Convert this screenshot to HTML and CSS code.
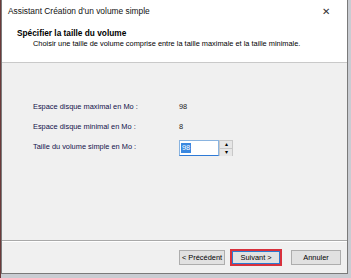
FILE: index.html
```html
<!DOCTYPE html>
<html lang="fr">
<head>
  <meta charset="UTF-8">
  <title>Assistant Création d'un volume simple</title>
  <link rel="stylesheet" href="styles.css">
</head>
<body>
  <div class="desk">
    <div class="window">
      <div class="titlebar">
        <span class="title">Assistant Création d'un volume simple</span>
        <span class="close">✕</span>
      </div>
      <div class="header">
        <h1>Spécifier la taille du volume</h1>
        <p>Choisir une taille de volume comprise entre la taille maximale et la taille minimale.</p>
      </div>
      <div class="content">
        <div class="row">
          <span class="label">Espace disque maximal en Mo :</span>
          <span class="value">98</span>
        </div>
        <div class="row">
          <span class="label">Espace disque minimal en Mo :</span>
          <span class="value">8</span>
        </div>
        <div class="row">
          <span class="label">Taille du volume simple en Mo :</span>
          <div class="spin">
            <div class="spin-input"><span class="sel">98</span></div>
            <div class="spin-btns">
              <div class="spin-btn">&#9652;</div>
              <div class="spin-btn">&#9662;</div>
            </div>
          </div>
        </div>
      </div>
      <div class="footer">
        <button class="btn">&lt; Précédent</button>
        <button class="btn btn-default">Suivant &gt;</button>
        <button class="btn btn-cancel">Annuler</button>
      </div>
    </div>
  </div>
</body>
</html>
```

FILE: styles.css
```css
body {
  margin: 0;
  background: #b9bcc2;
  font-family: Tahoma, "Liberation Sans", sans-serif;
  font-size: 7.4px;
  color: #000;
}
.desk {
  width: 351px;
  height: 278px;
  background: linear-gradient(90deg, #6b3a3a 0 1px, #c9ccd2 1px);
  overflow: hidden;
}
.window {
  margin-left: 1px;
  width: 345px;
  height: 273px;
  border: 1px solid #7a7a7a;
  border-top: none;
  background: #f0f0f0;
  display: flex;
  flex-direction: column;
}
.titlebar {
  height: 22px;
  background: #fff;
  display: flex;
  align-items: center;
  justify-content: space-between;
  padding: 0 17px 0 6px;
}
.title {
  font-family: "Liberation Sans", sans-serif;
  font-size: 8.4px;
  color: #111;
}
.close {
  font-size: 10px;
  font-weight: 300;
  color: #333;
}
.header {
  height: 41px;
  background: #fff;
  border-bottom: 1px solid #c9c9c9;
  padding: 6px 0 0 15px;
  box-sizing: border-box;
}
.header h1 {
  margin: 0;
  font-size: 8.3px;
  font-weight: bold;
}
.header p {
  margin: 1px 0 0 16px;
  color: #000;
}
.content {
  flex: 1;
  padding: 38px 0 0 31px;
  border-bottom: 1px solid #a9a9a9;
  display: flex;
  flex-direction: column;
  gap: 9px;
}
.row {
  display: flex;
  align-items: center;
  height: 11px;
}
.label {
  width: 146px;
  color: #10104a;
}
.value {
  color: #222;
}
.spin {
  display: flex;
  height: 16px;
  margin-top: 2px;
}
.spin-input {
  width: 36px;
  background: #fff;
  border: 1px solid #8ab4e0;
  border-bottom-color: #2e7ad6;
  padding: 2px 1px;
  display: flex;
  align-items: center;
}
.sel {
  background: #3a88e0;
  color: #fff;
  padding: 0 1px;
  line-height: 10px;
}
.spin-btns {
  width: 12px;
  background: #c8c8c8;
  display: flex;
  flex-direction: column;
  gap: 1px;
  padding: 1px;
}
.spin-btn {
  flex: 1;
  background: #e6e6e6;
  font-size: 6px;
  line-height: 7px;
  text-align: center;
  color: #000;
}
.footer {
  height: 31px;
  border-top: 1px solid #fff;
  display: flex;
  align-items: center;
  padding: 0 6px 0 177px;
  gap: 5px;
}
.btn {
  height: 15px;
  width: 47px;
  padding: 0;
  border: 1px solid #adadad;
  background: #e1e1e1;
  font-family: Tahoma, "Liberation Sans", sans-serif;
  font-size: 7.4px;
  color: #000;
}
.btn-default {
  width: 53px;
  height: 17px;
  border: 2px solid #d8313d;
  box-shadow: inset 0 0 0 1px #2a7ad1;
}
.btn-cancel {
  width: 51px;
  margin-left: 4px;
}
```
